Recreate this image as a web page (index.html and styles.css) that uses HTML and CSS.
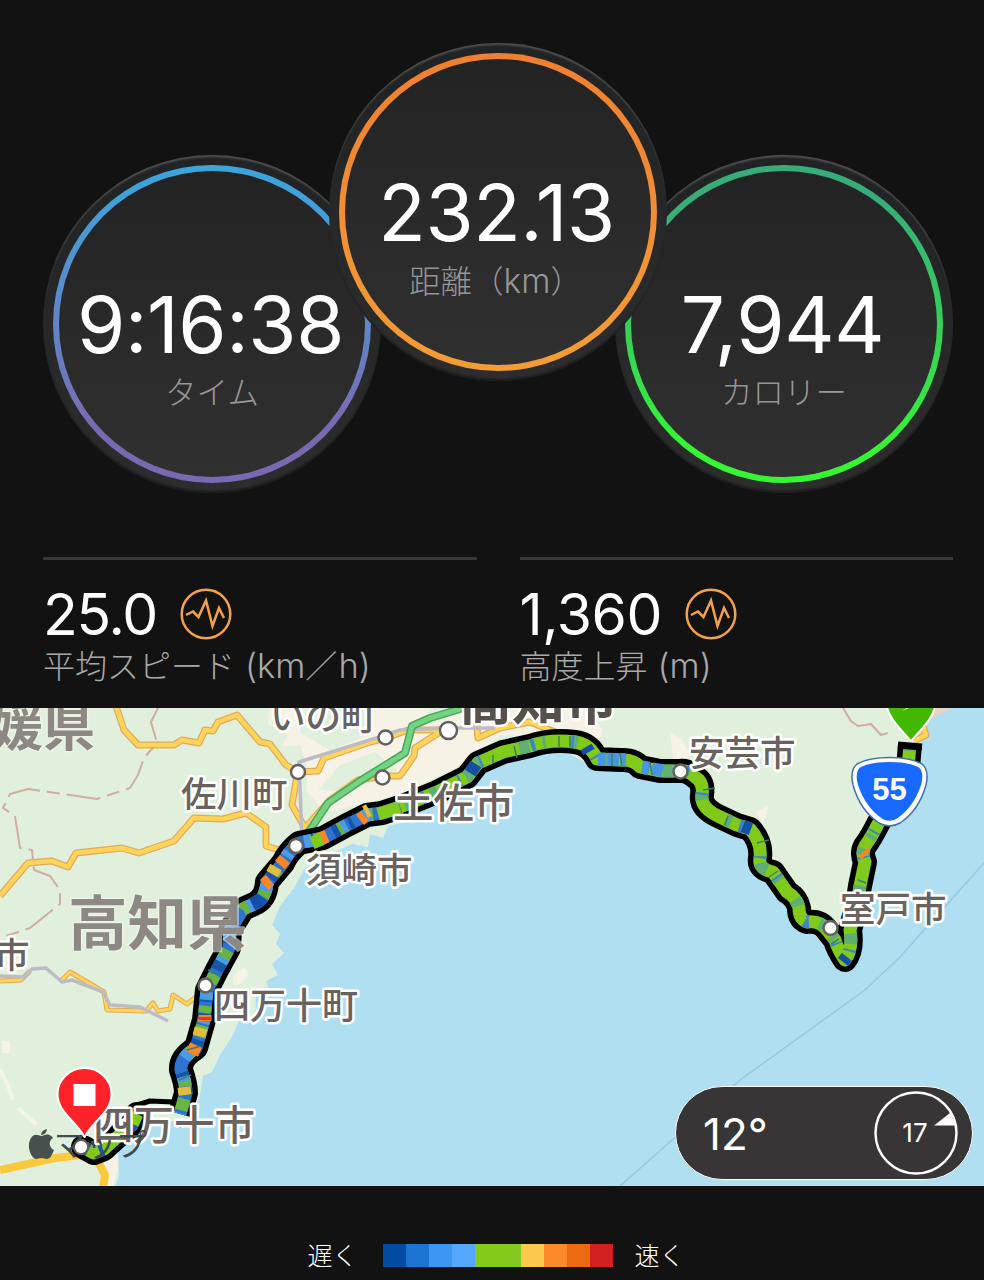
FILE: index.html
```html
<!DOCTYPE html>
<html lang="ja">
<head>
    <meta charset="UTF-8">
    <meta name="viewport" content="width=device-width, initial-scale=1.0">
    <title>ライド概要</title>
    <link rel="stylesheet" href="styles.css">
</head>
<body>
    <div class="dials">
        <div class="dial dial-time">
            <div class="ring">
                <div class="face">
                    <div class="dial-value">9:16:38</div>
                    <div class="dial-label">タイム</div>
                </div>
            </div>
        </div>
        <div class="dial dial-distance">
            <div class="ring">
                <div class="face">
                    <div class="dial-value">232.13</div>
                    <div class="dial-label">距離（<span class="unit">km</span>）</div>
                </div>
            </div>
        </div>
        <div class="dial dial-calories">
            <div class="ring">
                <div class="face">
                    <div class="dial-value">7,944</div>
                    <div class="dial-label">カロリー</div>
                </div>
            </div>
        </div>
    </div>

    <div class="stats">
        <div class="stat">
            <div class="stat-row">
                <span class="stat-value">25.0</span>
                <svg class="pulse" viewBox="0 0 52 52">
                    <circle cx="26" cy="26" r="24.3"/>
                    <path d="M6 27 L13 23.5 L18.5 29 L26 12.5 L32.5 38 L39 20 L44 30"/>
                </svg>
            </div>
            <div class="stat-label">平均スピード <span class="unit">(km</span>／<span class="unit">h)</span></div>
        </div>
        <div class="stat">
            <div class="stat-row">
                <span class="stat-value">1,360</span>
                <svg class="pulse" viewBox="0 0 52 52">
                    <circle cx="26" cy="26" r="24.3"/>
                    <path d="M6 27 L13 23.5 L18.5 29 L26 12.5 L32.5 38 L39 20 L44 30"/>
                </svg>
            </div>
            <div class="stat-label">高度上昇 <span class="unit">(m)</span></div>
        </div>
    </div>

    <div class="map">
        <svg class="map-canvas" viewBox="0 708 984 478">
            <defs>
                <path id="route-east" d="M910 744 L908 768 L892 800 L878 824 Q871 838 865 846 Q861 853 865 862 L860 886 L857 905 L850 930 Q853 950 845 960 Q838 950 835 940 L827 930 Q820 920 807 922 Q799 919 799 908 Q797 898 787 892 L773 872 Q758 869 760 858 Q762 842 750 829 L737 825 L720 817 Q700 808 702 795 Q704 782 695 777 Q688 770 680 771 L660 771 L640 767 Q634 759 620 760 L597 759 Q590 744 575 742 Q550 739 530 746 L503 752 L478 763 L467 777 L437 792 L400 807"/>
                <path id="route-west" d="M400 807 L382 813 L367 815 L347 825 L323 838 L299 843 Q288 852 283 863 L267 882 Q266 899 254 904 L243 909 L230 930 L229 948 L217 970 L207 990 L204 1020 L196 1048 Q180 1058 181 1070 Q186 1084 186 1093 L180 1114"/>
                <path id="route-end" d="M137 1114 L132 1125 L116 1138 L104 1149 L94 1153 L83 1147"/>
            </defs>

            <!-- land -->
            <path class="land" d="M0 700 H938 L924 720 L921 745 L900 790 L880 825 L872 860 L868 890 L858 950 L846 966 L832 950 L808 930 L790 902 L770 876 L754 850 L742 832 L718 822 L698 804 L694 782 L640 773 L592 766 L562 750 L510 759 L474 780 L430 802 L405 822 L388 826 L383 838 L370 834 L368 847 L352 844 L330 854 L305 868 L294 888 L280 906 L272 925 L280 934 L276 944 L284 953 L272 964 L278 975 L266 981 L269 989 L256 996 L255 1022 L240 1018 L233 1035 L220 1055 L212 1072 L203 1076 L200 1095 L190 1120 L160 1122 L140 1130 L118 1150 L119 1175 L114 1190 H0 Z"/>
            <path class="town" d="M270 708 L268 724 L288 734 L282 746 L300 745 L308 770 L306 790 L325 812 L400 795 L468 762 L500 735 L600 738 L602 730 L588 708 Z"/>
            <path class="park" d="M300 708 L375 708 L370 735 L330 750 L300 733 Z M340 765 L375 752 L398 770 L350 792 L318 790 Z M430 708 H452 L446 720 L425 722 Z"/>
            <path class="town" d="M670 732 l12 8 l8 15 l-2 14 l-14 -2 Z M755 812 l14 -6 l-6 16 Z M239 971 q8 -6 9 4 q-5 10 -14 10 q-4 -7 5 -14 Z M104 1150 l14 -6 v26 l-5 16 h-14 Z M218 940 l20 -4 l-4 20 l-12 8 Z M2 1041 l8 0 l0 12 l-8 0 Z"/>
            <path class="trail" d="M0 1070 L8 1085 L13 1100 M18 1108 L36 1124"/>
            <path class="beach" d="M922 708 h30 l-22 12 l-8 18 l-4 2 Z"/>

            <!-- borders and ferry lines -->
            <path class="ferry" d="M984 863 L900 957 L865 990 L740 1080 L620 1186"/>
            <path class="border" d="M158 708 L151 722 L157 743 L144 758 L138 775 L130 788 L97 799 L28 789 L10 794 L3 808 L15 816 L20 848 L32 850 L34 870 L50 876 L60 890 L60 904 L30 928 L0 938"/>
            <path class="border solid" d="M843 708 L851 721 L858 726 L871 724 L881 735 L888 733"/>

            <!-- roads -->
            <g class="road-edge">
                <path d="M116 706 L124 730 L138 745 L174 745 L182 740 L199 743 L205 730 L213 731 L218 722 L237 715 L260 742 L270 744 L286 765 L298 772 L318 771 L324 758 L370 742 L386 738 L408 730 L440 730"/>
                <path d="M0 896 L28 863 L52 861 L68 867 L76 853 L122 848 L139 853 L174 841 L194 818 L223 819 L246 813 L266 827 L266 846 L282 851"/>
                <path d="M297 775 L292 805 L305 828 L330 800 L358 780 L384 776 L400 776 L414 756 L415 748 L440 732"/>
                <path d="M475 708 L478 738 L500 728 L530 722 L560 734"/>
                <path d="M923 726 L926 735 L914 741"/>
            </g>
            <g class="road">
                <path d="M116 706 L124 730 L138 745 L174 745 L182 740 L199 743 L205 730 L213 731 L218 722 L237 715 L260 742 L270 744 L286 765 L298 772 L318 771 L324 758 L370 742 L386 738 L408 730 L440 730"/>
                <path d="M0 896 L28 863 L52 861 L68 867 L76 853 L122 848 L139 853 L174 841 L194 818 L223 819 L246 813 L266 827 L266 846 L282 851"/>
                <path d="M297 775 L292 805 L305 828 L330 800 L358 780 L384 776 L400 776 L414 756 L415 748 L440 732"/>
                <path d="M475 708 L478 738 L500 728 L530 722 L560 734"/>
                <path d="M923 726 L926 735 L914 741"/>
            </g>
            <path class="road-edge small" d="M0 981 L21 980 L30 971 M60 982 L70 972 L104 992 L107 1010 L146 1011 L153 1003 L158 1011 L170 1009 L173 995 L187 1004 L196 997"/>
            <path class="road small" d="M0 981 L21 980 L30 971 M60 982 L70 972 L104 992 L107 1010 L146 1011 L153 1003 L158 1011 L170 1009 L173 995 L187 1004 L196 997"/>
            <path class="rail" d="M0 976 L24 977 L32 969 L46 968 L62 982 L72 980 L103 992 L110 1005 L140 1007 L168 1021 M302 840 L299 762 L370 740 L400 730 L445 728 L495 728"/>
            <path class="coast-road" d="M0 1170 L55 1158 L82 1155 M96 1158 L105 1175 L103 1188"/>
            <path class="motorway-edge" d="M308 833 L328 803 L360 781 L405 753 L412 726 L430 718 L470 706"/>
            <path class="motorway" d="M308 833 L328 803 L360 781 L405 753 L412 726 L430 718 L470 706"/>

            <!-- ride track, coloured by speed -->
            <g class="track-outline">
                <use href="#route-east"/>
                <use href="#route-west"/>
                <use href="#route-end" class="rounded"/>
                <path class="thin" d="M174 1102 L150 1101 L137 1105 M176 1122 L182 1126"/>
            </g>
            <g class="track">
                <use href="#route-east" class="green"/>
                <use href="#route-east" class="teal"/>
                <use href="#route-east" class="blue-thin"/>
                <use href="#route-west" class="blue"/>
                <use href="#route-west" class="green-dash"/>
                <use href="#route-west" class="navy-dash"/>
                <use href="#route-west" class="sky-dash"/>
                <use href="#route-end" class="green"/>
                <use href="#route-end" class="navy-dash"/>
                <path class="sky" d="M598 759 L626 760 M642 767 L664 771"/>
                <path class="navy" d="M476 764 L470 773 M586 747 L589 752 M743 826 L751 829 M847 957 L843 962 M252 904 L260 900"/>
                <path class="orange" d="M285 859 L280 865 M270 880 L264 885 M327 836 L320 839 M365 816 L360 820 M863 852 L866 855 M196 1045 L192 1054 M205 1015 L205 1021"/>
                <path class="yellow" d="M276 867 L272 874 M201 1028 L199 1036 M184 1087 L185 1095 M369 810 L365 812"/>
                <path class="red" d="M205 1017 v3"/>
                <path class="green" d="M399 808 L378 814 M312 843 L322 839"/>
            </g>
            <path class="track-cap" d="M898 745 L922 747"/>
            <path class="specks" d="M493 755 v8 M514 746 l3 12 M559 736 v12 M570 736 v11 M612 754 v12 M620 754 l2 12 M650 763 l2 12 M703 790 l12 -2 M728 816 l-3 9 M769 877 l9 -6 M757 843 l12 -3 M831 944 l8 -5 M858 880 l8 3 M208 970 l14 5 M187 1050 l14 -4 M179 1080 l12 -5"/>

            <!-- towns -->
            <g class="places">
                <circle cx="385.500" cy="737.500" r="7"/>
                <circle cx="448.500" cy="730.500" r="8.500"/>
                <circle cx="298" cy="772" r="7"/>
                <circle cx="382.500" cy="777.500" r="7"/>
                <circle cx="296" cy="846" r="7"/>
                <circle cx="680.500" cy="771.500" r="7"/>
                <circle cx="830.500" cy="928" r="7"/>
                <circle cx="205.500" cy="985.500" r="7"/>
                <circle cx="81" cy="1147" r="7"/>
            </g>
            <g class="names">
                <text class="prefecture" x="-9" y="746" font-size="52">媛県</text>
                <text class="prefecture" x="68" y="945" font-size="59.500">高知県</text>
                <text class="city" x="459" y="720" font-size="53">高知市</text>
                <text x="270" y="730" font-size="35.500">いの町</text>
                <text x="181" y="807" font-size="35.500">佐川町</text>
                <text x="393" y="818" font-size="40.500">土佐市</text>
                <text x="306" y="883" font-size="35.500">須崎市</text>
                <text x="689" y="766" font-size="35.500">安芸市</text>
                <text x="840" y="922" font-size="35.500">室戸市</text>
                <text x="-6" y="968" font-size="35.500">市</text>
                <text x="214" y="1019" font-size="36">四万十町</text>
                <text x="93" y="1140" font-size="40.500">四万十市</text>
            </g>

            <!-- map attribution -->
            <path class="apple" d="M41 1136 C43 1136 45 1134 48 1134.500 C50 1135 52 1136 53 1138 C48 1141 49 1148 54 1150 C52 1155 50 1159 47 1159 C45 1159 44 1158 41.500 1158 C39 1158 38 1159 36 1159 C31 1158 26 1146 31 1138 C34 1133 38 1135 41 1136 Z M41 1135 C41 1132 43 1130 47 1129 C47 1132 44 1135 41 1135 Z"/>
            <text class="attribution" x="54" y="1156">マップ</text>
            <circle class="place-top" cx="81" cy="1147" r="6"/>

            <!-- route 55 shield -->
            <path class="shield-edge" d="M890 757.500 C906 757.500 917 761 922 764 C927 768 928 776 926 785 C921 803 912 815 900 823 C893 827 886 827 879 823 C867 815 858 803 853 785 C851 776 852 768 857 764 C862 761 873 757.500 890 757.500 Z"/>
            <path class="shield" d="M890 762 C905 762 914 764.500 919 767.500 C923 771 923 778 921 785 C916 800 908 811 897 818.500 C892 821.500 887 821.500 882 818.500 C871 811 863 800 858 785 C856 778 856 771 860 767.500 C865 764.500 874 762 890 762 Z"/>
            <text class="shield-text" x="889.500" y="800">55</text>

            <!-- start and finish pins -->
            <path class="pin start" d="M885 700 C888 717 897 726 911 741 C925 726 934 717 937 700 Z"/>
            <path class="pin-mark" d="M902 711 l9 -6 v2 Z"/>
            <path class="pin finish" d="M84.500 1068 C99.500 1068 111.500 1080 111.500 1094 C111.500 1112 94 1120 84.500 1137 C75 1120 57.500 1112 57.500 1094 C57.500 1080 69.500 1068 84.500 1068 Z"/>
            <rect class="pin-mark" x="73.500" y="1084" width="22" height="22"/>
        </svg>

        <div class="weather">
            <span class="temperature">12°</span>
            <svg class="wind" viewBox="0 0 84 84">
                <circle cx="42" cy="42" r="40.500"/>
                <path d="M60 34.500 L76 22 L82 34.500 Z"/>
                <text x="41" y="51">17</text>
            </svg>
        </div>
    </div>

    <div class="legend">
        <span>遅く</span>
        <div class="scale">
            <i class="s1"></i><i class="s2"></i><i class="s3"></i><i class="s4"></i><i class="s5"></i><i class="s5"></i><i class="s6"></i><i class="s7"></i><i class="s8"></i><i class="s9"></i>
        </div>
        <span>速く</span>
    </div>
</body>
</html>
```
FILE: styles.css
```css
* {
    box-sizing: border-box;
}

body {
    margin: 0;
    width: 984px;
    height: 1280px;
    overflow: hidden;
    background-color: #121212;
    color: #fff;
    font-family: Inter, "Noto Sans CJK JP", sans-serif;
}

/* dials */
.dials {
    display: flex;
    align-items: flex-end;
    height: 493px;
    padding-left: 43px;
}

.dial {
    flex: none;
    width: 338px;
    height: 338px;
    padding: 10px;
    border-radius: 50%;
    background: linear-gradient(#202223, #2d2d2d);
    box-shadow: inset 0 3px 2px -1px #505050, inset 0 -3px 2px -1px #1c1c1c;
}

.dial-distance {
    z-index: 1;
    margin: 0 -52px 112px;
}

.ring {
    height: 100%;
    padding: 6px;
    border-radius: 50%;
}

.dial-time .ring {
    background: linear-gradient(#3ba5dc, #5f86c6 50%, #7b68b2 85%);
}

.dial-distance .ring {
    background: linear-gradient(#ef7f31, #f39d36);
}

.dial-calories .ring {
    background: linear-gradient(#38ac78 10%, #35cf5a 50%, #36f534 90%);
}

.face {
    height: 100%;
    padding-top: 114px;
    border-radius: 50%;
    background: linear-gradient(#232323, #303030);
    text-align: center;
    white-space: nowrap;
}

.dial-value {
    padding-right: 3px;
    font-size: 78px;
    line-height: 80px;
    letter-spacing: -0.4px;
}

.dial-label {
    margin-top: 8px;
    font-size: 31.5px;
    font-weight: 300;
    line-height: 40px;
    color: #969696;
}

.dial-distance .dial-label {
    padding-right: 5px;
}

.unit {
    font-size: 33.5px;
}

/* stats */
.stats {
    display: flex;
    gap: 43px;
    height: 215px;
    padding: 64px 31px 0 43px;
}

.stat {
    flex: 1;
    height: 140px;
    padding-top: 26px;
    border-top: 3px solid #383838;
}

.stat-row {
    display: flex;
    align-items: center;
    gap: 23px;
    height: 56px;
}

.stat-value {
    font-size: 57px;
    letter-spacing: -1.2px;
}

.stat:last-child .stat-value {
    letter-spacing: -0.4px;
}

.pulse {
    width: 52px;
    height: 52px;
    fill: none;
    stroke: #f5a149;
    stroke-width: 2.5;
}

.stat-label {
    margin-top: 4px;
    font-size: 32px;
    font-weight: 300;
    line-height: 40px;
    color: #a8a8a8;
}

.stat-label .unit {
    margin-left: 1px;
    font-size: 34.5px;
}

/* map */
.map {
    position: relative;
    height: 478px;
    overflow: hidden;
    background-color: #b0dff2;
}

.map-canvas {
    display: block;
    width: 984px;
    height: 478px;
    fill: none;
    stroke-linejoin: round;
}

.land { fill: #e1f0dc; }
.town { fill: #f7f2e6; }
.park { fill: #e1f0dc; }
.beach { fill: #e6d3cc; }
.trail { stroke: #f4f4e8; stroke-width: 4; }
.ferry { stroke: #97c9e0; stroke-width: 1.5; }
.border { stroke: #d3aca0; stroke-width: 2; stroke-dasharray: 34 7 13 7; }
.border.solid { stroke-dasharray: none; }
.road-edge { stroke: #dfa95e; stroke-width: 7; }
.road { stroke: #ffd559; stroke-width: 4.5; }
.road-edge.small { stroke-width: 5; }
.road.small { stroke-width: 3; }
.rail { stroke: #bdbcc6; stroke-width: 3.5; }
.coast-road { stroke: #fbc93d; stroke-width: 8; }
.motorway-edge { stroke: #49a65a; stroke-width: 8; }
.motorway { stroke: #72d381; stroke-width: 5; }

.track-outline {
    stroke: #000;
    stroke-width: 24;
}

.track-outline .rounded {
    stroke-linecap: round;
}

.track-outline .thin {
    stroke-width: 5;
}

.track-cap {
    stroke: #000;
    stroke-width: 7;
}

.track { stroke-width: 13; }
.green { stroke: #7fca1b; }
.teal { stroke: #5fae74; stroke-dasharray: 7 25 3 14 10 41 4 12 6 32; }
.blue-thin { stroke: #3b86c8; stroke-dasharray: 2 37 4 52 2 27; }
.blue { stroke: #2e73cf; }
.green-dash { stroke: #68b544; stroke-dasharray: 12 16 9 24 7 13; }
.navy-dash { stroke: #1556ab; stroke-dasharray: 6 21 9 30 4 12; stroke-dashoffset: 16; }
.sky-dash { stroke: #4c9ce5; stroke-dasharray: 5 33 8 19; stroke-dashoffset: 8; }
.sky { stroke: #4796e5; stroke-dasharray: 7 3 11 2; }
.navy { stroke: #154fa6; }
.orange { stroke: #f88527; }
.yellow { stroke: #e2bc3e; }
.red { stroke: #e43b20; }
.specks { stroke: #367f6d; stroke-width: 1.5; }

.places {
    fill: #fff;
    stroke: #65605e;
    stroke-width: 2.5;
}

.place-top {
    fill: #fff;
}

.names {
    fill: #69625f;
    stroke: #fff;
    stroke-width: 5;
    paint-order: stroke;
    font-family: "Noto Sans CJK JP", sans-serif;
    font-weight: 500;
}

.prefecture {
    fill: #8e8884;
    stroke: rgba(240,245,236,0.6);
    stroke-width: 3;
    font-weight: 700;
}

.city {
    fill: #57504b;
    font-weight: 700;
}

.apple { fill: #46504c; }

.attribution {
    fill: #3f4a4c;
    font-size: 31px;
    font-weight: 400;
    font-family: "Noto Sans CJK JP", sans-serif;
}

.shield-edge { fill: #fff; stroke: #416fae; stroke-width: 1.5; }
.shield { fill: #1769ff; }

.shield-text {
    fill: #fff;
    font: bold 31px "Liberation Sans", sans-serif;
    text-anchor: middle;
}

.pin { stroke: #fff; stroke-width: 2; }
.start { fill: #42b800; }
.finish { fill: #ff2228; }
.pin-mark { fill: #fff; }

.weather {
    position: absolute;
    top: 378px;
    right: 11px;
    display: flex;
    align-items: center;
    justify-content: space-between;
    width: 298px;
    height: 94px;
    padding: 0 14px 0 27px;
    border: 1.5px solid #fff;
    border-radius: 47px;
    background-color: #373535;
}

.temperature {
    padding-top: 2px;
    font-size: 44px;
}

.wind {
    width: 84px;
    height: 84px;
}

.wind circle {
    fill: none;
    stroke: #fff;
    stroke-width: 2.5;
}

.wind path {
    fill: #fff;
}

.wind text {
    fill: #fff;
    font-size: 26px;
    text-anchor: middle;
}

/* legend */
.legend {
    display: flex;
    align-items: center;
    justify-content: center;
    gap: 25px;
    height: 94px;
    padding: 44px 0 0 8px;
    font-size: 25px;
    font-weight: 300;
}

.legend span {
    padding-bottom: 3px;
}

.legend span:last-child {
    margin-left: -3px;
}

.scale {
    display: flex;
}

.scale i {
    width: 23px;
    height: 23px;
}

.s1 { background-color: #034ca2; }
.s2 { background-color: #1b74d2; }
.s3 { background-color: #3c96f4; }
.s4 { background-color: #54a9ff; }
.s5 { background-color: #83ca1c; }
.s6 { background-color: #fbc94b; }
.s7 { background-color: #fb8b2a; }
.s8 { background-color: #ee6a10; }
.s9 { background-color: #d42020; }
```
